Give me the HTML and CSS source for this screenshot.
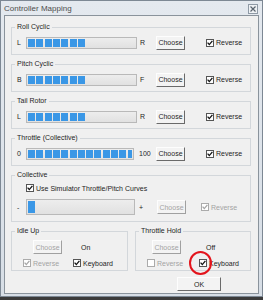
FILE: index.html
```html
<!DOCTYPE html>
<html>
  <head>
    <meta charset="UTF-8">
    <title>Controller Mapping</title>
    <link rel="stylesheet" href="styles.css">
  </head>
  <body>
    <div class="window">
      <!-- Title bar -->
      <div class="titlebar">
        <span class="title">Controller Mapping</span>
        <span class="close">
          <svg width="6" height="6" viewBox="0 0 6 6"><path d="M0.5 0.5 L5.5 5.5 M5.5 0.5 L0.5 5.5" stroke="#5b6570" stroke-width="1.2"/></svg>
        </span>
      </div>

      <div class="client">
        <fieldset class="group">
          <legend>Roll Cyclic</legend>
          <div class="row">
            <span class="end">L</span>
            <div class="track"><div class="fill" style="width:53%"></div></div>
            <span class="end hi">R</span>
            <button class="btn">Choose</button>
            <label class="check rev"><span class="box"><svg width="6" height="6" viewBox="0 0 6 6"><path d="M0.6 2.6 L2.3 4.6 L5.4 0.8" fill="none" stroke="#111" stroke-width="1.3"/></svg></span>Reverse</label>
          </div>
        </fieldset>

        <fieldset class="group">
          <legend>Pitch Cyclic</legend>
          <div class="row">
            <span class="end">B</span>
            <div class="track"><div class="fill" style="width:53%"></div></div>
            <span class="end hi">F</span>
            <button class="btn">Choose</button>
            <label class="check rev"><span class="box"><svg width="6" height="6" viewBox="0 0 6 6"><path d="M0.6 2.6 L2.3 4.6 L5.4 0.8" fill="none" stroke="#111" stroke-width="1.3"/></svg></span>Reverse</label>
          </div>
        </fieldset>

        <fieldset class="group">
          <legend>Tail Rotor</legend>
          <div class="row">
            <span class="end">L</span>
            <div class="track"><div class="fill" style="width:53%"></div></div>
            <span class="end hi">R</span>
            <button class="btn">Choose</button>
            <label class="check rev"><span class="box"><svg width="6" height="6" viewBox="0 0 6 6"><path d="M0.6 2.6 L2.3 4.6 L5.4 0.8" fill="none" stroke="#111" stroke-width="1.3"/></svg></span>Reverse</label>
          </div>
        </fieldset>

        <fieldset class="group">
          <legend>Throttle (Collective)</legend>
          <div class="row">
            <span class="end">0</span>
            <div class="track short"><div class="fill" style="width:100%"></div></div>
            <span class="end hi wide">100</span>
            <button class="btn">Choose</button>
            <label class="check rev"><span class="box"><svg width="6" height="6" viewBox="0 0 6 6"><path d="M0.6 2.6 L2.3 4.6 L5.4 0.8" fill="none" stroke="#111" stroke-width="1.3"/></svg></span>Reverse</label>
          </div>
        </fieldset>

        <fieldset class="group collective">
          <legend>Collective</legend>
          <label class="check curves"><span class="box"><svg width="6" height="6" viewBox="0 0 6 6"><path d="M0.6 2.6 L2.3 4.6 L5.4 0.8" fill="none" stroke="#111" stroke-width="1.3"/></svg></span>Use Simulator Throttle/Pitch Curves</label>
          <div class="row slider-row">
            <span class="end">-</span>
            <div class="track slider"><div class="fill" style="width:7px"></div></div>
            <span class="end hi plus">+</span>
            <button class="btn" disabled>Choose</button>
            <label class="check dim rev-small"><span class="box"><svg width="6" height="6" viewBox="0 0 6 6"><path d="M0.6 2.6 L2.3 4.6 L5.4 0.8" fill="none" stroke="#a6a6a6" stroke-width="1.3"/></svg></span>Reverse</label>
          </div>
        </fieldset>

        <div class="bottom">
          <fieldset class="group small idle">
            <legend>Idle Up</legend>
            <div class="line">
              <button class="btn" disabled>Choose</button>
              <span class="state">On</span>
            </div>
            <div class="line opts">
              <label class="check dim first"><span class="box"><svg width="6" height="6" viewBox="0 0 6 6"><path d="M0.6 2.6 L2.3 4.6 L5.4 0.8" fill="none" stroke="#a6a6a6" stroke-width="1.3"/></svg></span>Reverse</label>
              <label class="check"><span class="box"><svg width="6" height="6" viewBox="0 0 6 6"><path d="M0.6 2.6 L2.3 4.6 L5.4 0.8" fill="none" stroke="#111" stroke-width="1.3"/></svg></span>Keyboard</label>
            </div>
          </fieldset>

          <fieldset class="group small hold">
            <legend>Throttle Hold</legend>
            <div class="line">
              <button class="btn" disabled>Choose</button>
              <span class="state">Off</span>
            </div>
            <div class="line opts">
              <label class="check dim first"><span class="box"></span>Reverse</label>
              <label class="check marked"><span class="box"><svg width="6" height="6" viewBox="0 0 6 6"><path d="M0.6 2.6 L2.3 4.6 L5.4 0.8" fill="none" stroke="#111" stroke-width="1.3"/></svg></span>Keyboard<span class="ring"></span></label>
            </div>
          </fieldset>
        </div>

        <div class="footer">
          <button class="btn ok">OK</button>
        </div>
      </div>
    </div>
  </body>
</html>
```

FILE: styles.css
```css
body {
  margin: 0;
  background: #3b3b3b;
  font-family: "Liberation Sans", Arial, sans-serif;
  font-size: 7px;
  color: #1e1e1e;
}

.window {
  width: 263px;
  height: 297px;
  box-sizing: border-box;
  border: 1px solid #7d8894;
  background: linear-gradient(#e4e9ef, #d7dee6);
  padding: 0 3px 2px 3px;
  display: flex;
  flex-direction: column;
}

.titlebar {
  height: 14px;
  display: flex;
  align-items: center;
}

.title {
  font-size: 8px;
  color: #4d4d4d;
}

.close {
  margin-left: auto;
  margin-right: 1px;
  margin-top: 2px;
  width: 10px;
  height: 10px;
  box-sizing: border-box;
  border: 1px solid #8f9aa6;
  background: #eef1f4;
  display: flex;
  align-items: center;
  justify-content: center;
}

.client {
  flex: 1;
  background: #f0f0f0;
  border: 1px solid #8a939c;
  padding: 7px 7px 0 6px;
}

/* group boxes */
.group {
  margin: 5px 0 0 0;
  padding: 4px 0 4px 5px;
  border: 1px solid #d3d7db;
  min-width: 0;
}

.group:first-child {
  margin-top: 0;
}

.group legend {
  padding: 0 2px;
  margin-left: -2px;
  height: 8px;
  line-height: 8px;
}

.row {
  display: flex;
  align-items: center;
  height: 15px;
}

.end {
  width: 9px;
}

.end.hi {
  width: 19px;
  padding-left: 3px;
  box-sizing: border-box;
}

.end.wide {
  width: 22px;
  padding-left: 5px;
}

.end.plus {
  width: 22px;
  padding-left: 4px;
}

.track {
  width: 111px;
  height: 12px;
  box-sizing: border-box;
  border: 1px solid #b9b9b9;
  background: linear-gradient(#ededed, #e1e1e1);
  padding: 1px;
}

.track.short {
  width: 108px;
}

.track.slider {
  width: 109px;
  height: 16px;
}

.fill {
  height: 100%;
  background: repeating-linear-gradient(90deg, #3a97e6 0 7px, transparent 7px 8.3px);
}

.btn {
  width: 29px;
  height: 14px;
  padding: 0;
  font-family: inherit;
  font-size: 7px;
  color: #1e1e1e;
  background: #f3f3f3;
  border: 1px solid;
  border-color: #fdfdfd #6a6a6a #6a6a6a #fdfdfd;
  border-radius: 0;
}

.btn:disabled {
  color: #a3a3a3;
  border-color: #fdfdfd #a0a0a0 #a0a0a0 #fdfdfd;
}

.btn.ok {
  width: 44px;
  margin-right: 30px;
}

/* checkboxes */
.check {
  display: flex;
  align-items: center;
  gap: 2px;
}

.box {
  width: 8px;
  height: 8px;
  box-sizing: border-box;
  border: 1px solid #555;
  background: #fff;
  display: flex;
  align-items: center;
  justify-content: center;
}

.check.dim {
  color: #a3a3a3;
}

.check.dim .box {
  border-color: #ababab;
}

.check.rev {
  margin-left: 21px;
}

.check.rev-small {
  margin-left: 15px;
}

.check.curves {
  height: 10px;
  margin-left: 9px;
}

.collective {
  padding-bottom: 6px;
}

.slider-row {
  height: 16px;
  margin-top: 6px;
}

/* idle up / throttle hold */
.bottom {
  display: flex;
  gap: 7px;
  margin-top: 5px;
}

.group.small {
  margin: 0;
  padding: 5px 0 2px 5px;
}

.idle {
  width: 117px;
  box-sizing: border-box;
}

.hold {
  width: 116px;
  box-sizing: border-box;
}

.line {
  display: flex;
  align-items: center;
  height: 14px;
}

.line.opts {
  height: 10px;
  margin-top: 4px;
}

.idle .btn {
  margin-left: 16px;
}

.idle .state {
  margin-left: 19px;
}

.hold .btn {
  margin-left: 11px;
}

.hold .state {
  margin-left: 25px;
}

.check.first {
  margin-left: 6px;
  width: 50px;
}

.hold .check.first {
  width: 52px;
}

.marked {
  position: relative;
}

.ring {
  position: absolute;
  left: -10px;
  top: -8px;
  width: 23px;
  height: 24px;
  box-sizing: border-box;
  border: 2px solid #e3141c;
  border-radius: 50%;
}

.footer {
  display: flex;
  justify-content: flex-end;
  margin-top: 6px;
}
```
